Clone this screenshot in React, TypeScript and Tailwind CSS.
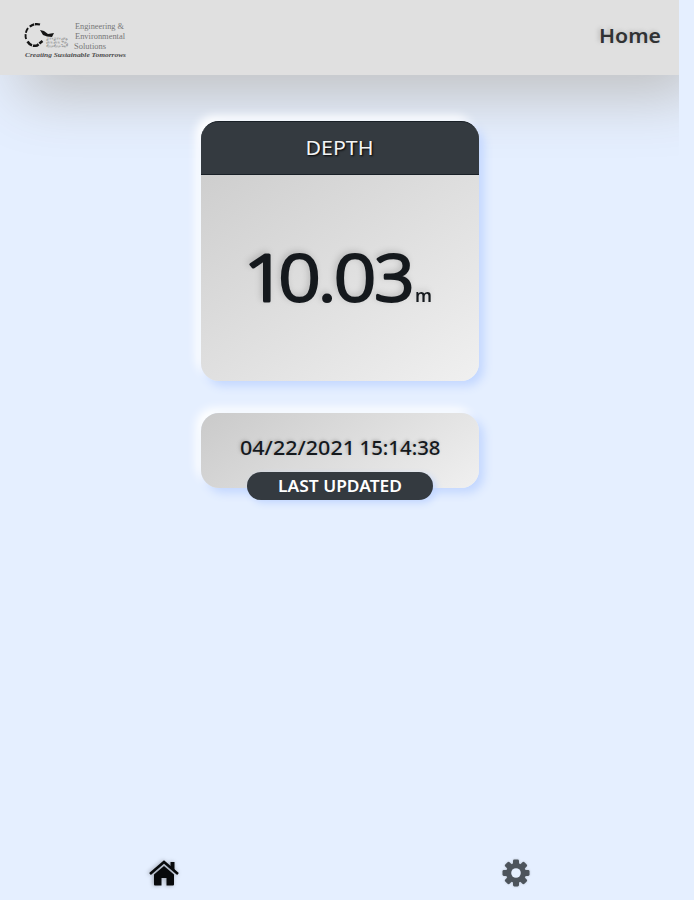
import React from "react";

function Logo() {
  return (
    <svg width="112" height="42" viewBox="0 0 112 42" role="img" aria-label="Engineering & Environmental Solutions" className="overflow-visible">
      <g fill="none" stroke="#151515">
        <path d="M19 5.500Q13 4 8.500 8" strokeWidth="2.300" strokeDasharray="5 0.800" />
        <path d="M7 9Q3 15 5.500 21" strokeWidth="1.900" strokeDasharray="5 1.500" />
        <path d="M6.500 22.500Q10 28 16 26.500L21.500 22" strokeWidth="2.500" strokeDasharray="6 1" />
      </g>
      <path d="M19 11L23 12L27 15L33 14L31 18L26 17.500L22 16Z" fill="#151515" />
      <text x="25" y="28" fontFamily='"Liberation Sans", sans-serif' fontSize="12" textLength="22" lengthAdjust="spacingAndGlyphs" fill="none" stroke="#8c8c8c" strokeWidth="0.700" strokeDasharray="2 1">EES</text>
      <g fontFamily='"Liberation Serif", serif' fontSize="8.500" fill="#777777">
        <text x="54" y="9.500" textLength="49" lengthAdjust="spacingAndGlyphs">Engineering &amp;</text>
        <text x="54" y="19.500" textLength="50" lengthAdjust="spacingAndGlyphs">Environmental</text>
        <text x="53" y="29.500" textLength="32" lengthAdjust="spacingAndGlyphs">Solutions</text>
      </g>
      <text x="4" y="38" fontFamily='"Liberation Serif", serif' fontSize="7" fontStyle="italic" fontWeight="700" fill="#4d4d4d" textLength="101" lengthAdjust="spacingAndGlyphs">Creating Sustainable Tomorrows</text>
    </svg>
  );
}

function HomeIcon() {
  return (
    <svg width="30" height="27" viewBox="0 0 30 27" className="drop-shadow-[-1px_0px_2px_#00000055]">
      <path d="M1 14L15 2L29 14" fill="none" stroke="#080a0c" strokeWidth="2.600" />
      <path d="M21.500 2H25.500V11L21.500 7.500Z" fill="#080a0c" />
      <path d="M5 14.500L15 6L25 14.500V24.500Q25 25.500 24 25.500H17.500V18H12.500V25.500H6Q5 25.500 5 24.500Z" fill="#080a0c" />
    </svg>
  );
}

function GearIcon() {
  const angles = [0, 45, 90, 135];
  return (
    <svg width="28" height="28" viewBox="0 0 28 28" className="drop-shadow-[0_0_1px_#00000033]">
      <g fill="#4d545c">
        {angles.map((a) => (
          <rect key={a} x="11" y="0.500" width="6" height="27" rx="1.400" transform={`rotate(${a} 14 14)`} />
        ))}
        <circle cx="14" cy="14" r="10" />
      </g>
      <circle cx="14" cy="14" r="4.800" fill="#e6f0ff" />
    </svg>
  );
}

export default function App() {
  return (
    <div className="flex h-[900px] w-[694px] flex-col overflow-hidden bg-[#e5efff] font-['Noto_Sans',sans-serif] text-[#15191d]">
      <div className="h-[165px] w-[679px] shrink-0 overflow-hidden">
        <header className="flex h-[75px] items-center justify-between bg-[#e0e0e0] pr-[18px] pl-[21px] shadow-[20px_20px_60px_#bebebe]">
          <div className="pt-[5px]"><Logo /></div>
          <svg width="62" height="30" className="mt-[-3px] overflow-visible [text-shadow:-2px_-1px_4px_#bbbbbb]">
            <text x="0" y="22" fontSize="19.500" fontWeight="600" fill="#303234" textLength="62" lengthAdjust="spacingAndGlyphs">Home</text>
          </svg>
        </header>
      </div>
      <main className="mt-[-44px] ml-[201px] flex w-[278px] flex-1 flex-col">
        <section className="h-[260px] rounded-[18px] bg-linear-145 from-[#cacaca] to-[#f0f0f0] shadow-[5px_5px_10px_#c3d7ff,-5px_-5px_10px_#ffffff]">
          <h1 className="flex h-[54px] justify-center rounded-t-[18px] border-y border-[#192027] bg-[#343a40]">
            <svg width="70" height="52" className="overflow-visible [text-shadow:1px_1px_2px_#000000]">
              <text x="0.500" y="33" fontSize="20" fill="#f3f4f5" textLength="68" lengthAdjust="spacingAndGlyphs">DEPTH</text>
            </svg>
          </h1>
          <svg width="278" height="206" className="drop-shadow-[-2px_-2px_3px_#00000028]">
            <g fontSize="64" fontWeight="300" fill="#15191d" stroke="#15191d" strokeWidth="3" strokeLinejoin="round">
              <text x="43" y="126" textLength="42" lengthAdjust="spacingAndGlyphs">1</text>
              <text x="77.500" y="126" textLength="42" lengthAdjust="spacingAndGlyphs">0</text>
              <text x="117" y="126" textLength="18" lengthAdjust="spacingAndGlyphs">.</text>
              <text x="133" y="126" textLength="42" lengthAdjust="spacingAndGlyphs">0</text>
              <text x="173.500" y="126" textLength="40" lengthAdjust="spacingAndGlyphs">3</text>
            </g>
            <text x="214" y="127" fontSize="17" fontWeight="600" fill="#15191d" textLength="17" lengthAdjust="spacingAndGlyphs">m</text>
          </svg>
        </section>
        <section className="mt-8 flex h-[75px] flex-col items-center rounded-[18px] bg-linear-145 from-[#cacaca] to-[#f0f0f0] shadow-[5px_5px_10px_#c3d7ff,-5px_-5px_10px_#ffffff]">
          <svg width="278" height="59" className="shrink-0 [text-shadow:-1px_-1px_3px_#aaaaaa]">
            <g fontSize="19" fontWeight="500" fill="#15191d">
              <text x="39" y="42" textLength="115" lengthAdjust="spacingAndGlyphs">04/22/2021</text>
              <text x="158.500" y="42" textLength="81" lengthAdjust="spacingAndGlyphs">15:14:38</text>
            </g>
          </svg>
          <div className="flex h-7 w-[186px] shrink-0 justify-center rounded-full bg-[#343a40] shadow-[3px_3px_7px_#c3d7ff]">
            <svg width="124" height="28">
              <text x="0" y="19.500" fontSize="16.500" fontWeight="600" fill="#ffffff" textLength="124" lengthAdjust="spacingAndGlyphs">LAST UPDATED</text>
            </svg>
          </div>
        </section>
      </main>
      <nav className="flex h-[54px] shrink-0 items-center justify-between pr-[164px] pl-[149px]">
        <HomeIcon />
        <GearIcon />
      </nav>
    </div>
  );
}
